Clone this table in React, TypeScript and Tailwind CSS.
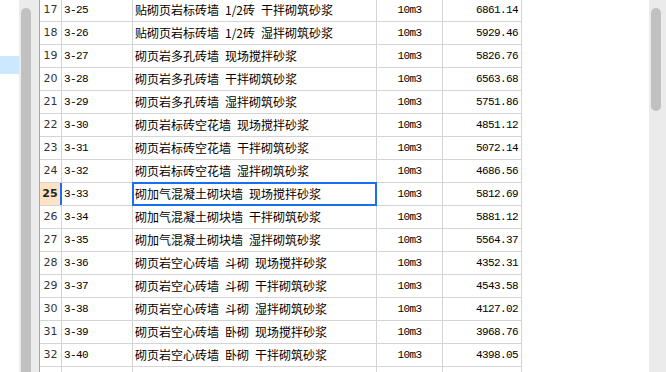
const rows = [
  { no: 17, code: '3-25', name: '贴砌页岩标砖墙 1/2砖 干拌砌筑砂浆', price: '6861.14' },
  { no: 18, code: '3-26', name: '贴砌页岩标砖墙 1/2砖 湿拌砌筑砂浆', price: '5929.46' },
  { no: 19, code: '3-27', name: '砌页岩多孔砖墙 现场搅拌砂浆', price: '5826.76' },
  { no: 20, code: '3-28', name: '砌页岩多孔砖墙 干拌砌筑砂浆', price: '6563.68' },
  { no: 21, code: '3-29', name: '砌页岩多孔砖墙 湿拌砌筑砂浆', price: '5751.86' },
  { no: 22, code: '3-30', name: '砌页岩标砖空花墙 现场搅拌砂浆', price: '4851.12' },
  { no: 23, code: '3-31', name: '砌页岩标砖空花墙 干拌砌筑砂浆', price: '5072.14' },
  { no: 24, code: '3-32', name: '砌页岩标砖空花墙 湿拌砌筑砂浆', price: '4686.56' },
  { no: 25, code: '3-33', name: '砌加气混凝土砌块墙 现场搅拌砂浆', price: '5812.69' },
  { no: 26, code: '3-34', name: '砌加气混凝土砌块墙 干拌砌筑砂浆', price: '5881.12' },
  { no: 27, code: '3-35', name: '砌加气混凝土砌块墙 湿拌砌筑砂浆', price: '5564.37' },
  { no: 28, code: '3-36', name: '砌页岩空心砖墙 斗砌 现场搅拌砂浆', price: '4352.31' },
  { no: 29, code: '3-37', name: '砌页岩空心砖墙 斗砌 干拌砌筑砂浆', price: '4543.58' },
  { no: 30, code: '3-38', name: '砌页岩空心砖墙 斗砌 湿拌砌筑砂浆', price: '4127.02' },
  { no: 31, code: '3-39', name: '砌页岩空心砖墙 卧砌 现场搅拌砂浆', price: '3968.76' },
  { no: 32, code: '3-40', name: '砌页岩空心砖墙 卧砌 干拌砌筑砂浆', price: '4398.05' },
  { no: 33, code: '3-41', name: '砌页岩空心砖墙 卧砌 湿拌砌筑砂浆', price: '4210.33' },
];

const SELECTED = 25;
const mono = "font-['Liberation_Mono',monospace] text-[11px] tracking-[-0.6px]";

export default function App() {
  return (
    <div className="w-[666px] h-[372px] overflow-hidden flex bg-white text-black">
      {/* left tree panel edge */}
      <div className="w-[19px] shrink-0 pt-[56px]">
        <div className="h-[18px] bg-[#cce8ff]" />
      </div>
      <div className="w-[20px] shrink-0 bg-[#ebebeb] pl-[2px] pt-[8px]">
        <div className="w-[10px] h-full rounded-t-full bg-[#c1c1c1]" />
      </div>

      {/* grid */}
      <div className="flex-1 flex border-l border-[#a8a8a8]">
        <div className="w-[482px] shrink-0 -mt-px">
          {rows.map((r) => {
            const sel = r.no === SELECTED;
            return (
              <div key={r.no} className="flex h-[23px] border-b border-[#d4d4d4]">
                <div
                  className={
                    sel
                      ? "w-[22px] shrink-0 flex items-center justify-center border-r-2 border-[#1a6ff0] bg-[#fde3c3] font-['DejaVu_Sans',sans-serif] text-[11px] font-bold text-[#222]"
                      : "w-[22px] shrink-0 flex items-center justify-center border-r border-[#d4d4d4] font-['DejaVu_Sans',sans-serif] text-[11px] text-[#333]"
                  }
                >
                  {r.no}
                </div>
                <div className={`w-[71px] shrink-0 flex items-center pl-[2px] border-r border-[#d4d4d4] ${mono}`}>
                  {r.code}
                </div>
                <div className="relative w-[244px] shrink-0 flex items-center pl-[2px] border-r border-[#d4d4d4] font-['Noto_Sans_CJK_SC',sans-serif] text-[12px] whitespace-nowrap">
                  {r.name.split(' ').join('\u2002')}
                  {sel && <div className="absolute -top-px -left-px -right-px -bottom-px border-2 border-[#1a6ff0]" />}
                </div>
                <div className={`w-[66px] shrink-0 flex items-center justify-center border-r border-[#d4d4d4] ${mono}`}>
                  10m3
                </div>
                <div className={`w-[79px] shrink-0 flex items-center justify-end pr-[3px] border-r border-[#d4d4d4] ${mono}`}>
                  {r.price}
                </div>
              </div>
            );
          })}
        </div>
        <div className="flex-1" />
      </div>

      {/* right scrollbar */}
      <div className="w-[17px] shrink-0 bg-[#ebebeb] pl-[2px] pt-[8px]">
        <div className="w-[10px] h-[103px] rounded-full bg-[#c1c1c1]" />
      </div>
    </div>
  );
}
